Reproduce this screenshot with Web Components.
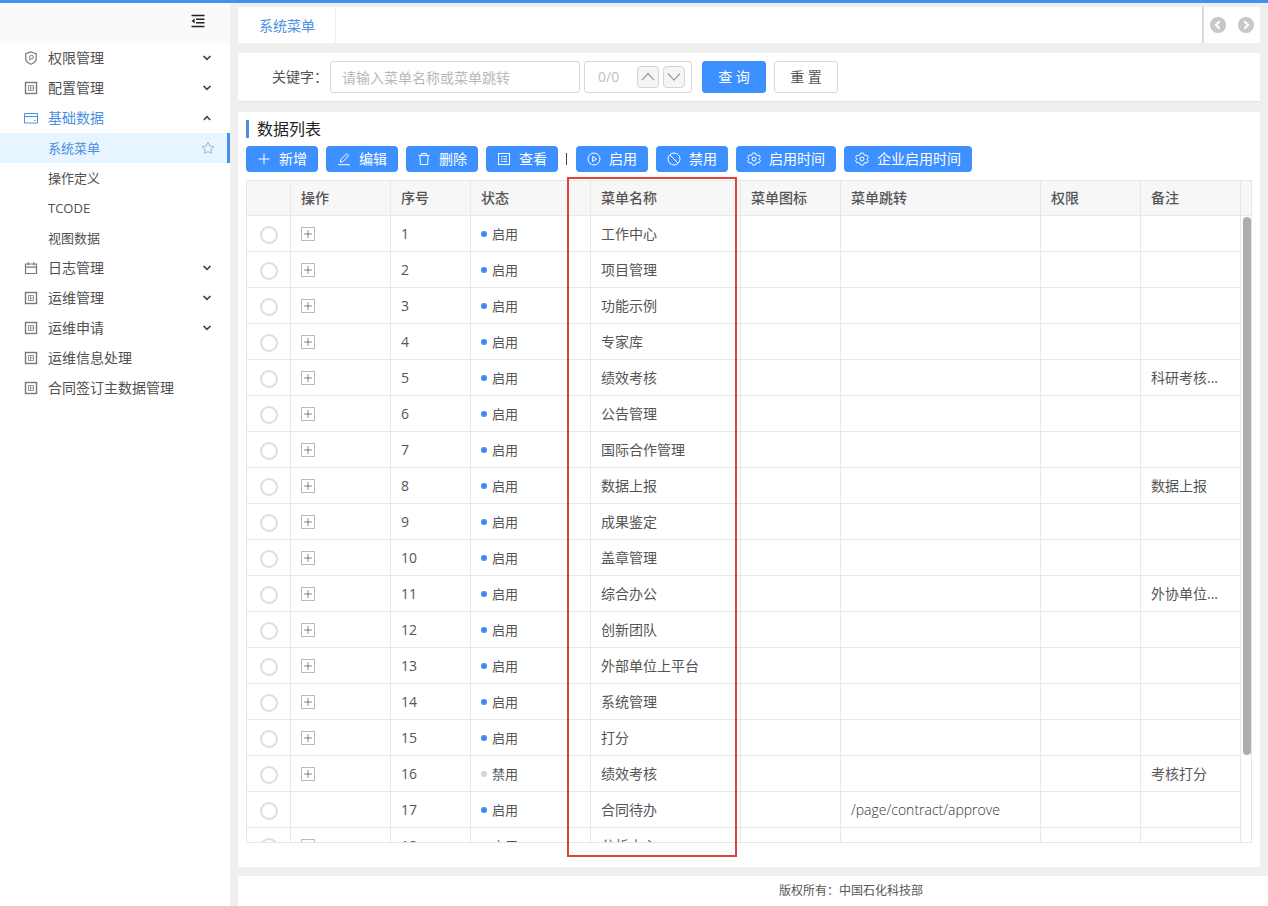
<!DOCTYPE html>
<html lang="zh-CN">
<head>
<meta charset="utf-8">
<title>系统菜单</title>
<style>
  html, body { height: 100%; margin: 0; }
  body { font: 14px/20px "Open Sans", "Noto Sans CJK SC", sans-serif; color: #555; }
</style>
</head>
<body>
<app-shell>
  <side-nav slot="nav">
    <nav-item icon="shield" arrow="down">权限管理</nav-item>
    <nav-item icon="list" arrow="down">配置管理</nav-item>
    <nav-item icon="card" arrow="up" active>基础数据</nav-item>
    <nav-item sub selected>系统菜单</nav-item>
    <nav-item sub>操作定义</nav-item>
    <nav-item sub>TCODE</nav-item>
    <nav-item sub>视图数据</nav-item>
    <nav-item icon="calendar" arrow="down">日志管理</nav-item>
    <nav-item icon="list" arrow="down">运维管理</nav-item>
    <nav-item icon="list" arrow="down">运维申请</nav-item>
    <nav-item icon="list">运维信息处理</nav-item>
    <nav-item icon="list">合同签订主数据管理</nav-item>
  </side-nav>
  <tab-bar>系统菜单</tab-bar>
  <search-panel></search-panel>
  <data-panel heading="数据列表">
    <tool-button slot="tools" icon="plus">新增</tool-button>
    <tool-button slot="tools" icon="edit">编辑</tool-button>
    <tool-button slot="tools" icon="trash">删除</tool-button>
    <tool-button slot="tools" icon="table">查看</tool-button>
    <tool-divider slot="tools"></tool-divider>
    <tool-button slot="tools" icon="play">启用</tool-button>
    <tool-button slot="tools" icon="ban">禁用</tool-button>
    <tool-button slot="tools" icon="gear">启用时间</tool-button>
    <tool-button slot="tools" icon="gear">企业启用时间</tool-button>
    <data-table></data-table>
  </data-panel>
  <page-footer slot="footer">版权所有：中国石化科技部</page-footer>
</app-shell>

<script>
const ICONS = {
  shield: '<path d="M7 1 12.2 2.8V8.6C12.2 10.6 9.4 12.3 7 13.3 4.6 12.3 1.8 10.6 1.8 8.6V2.8Z" stroke-width="1.2"/><circle cx="7.5" cy="6.2" r="1.9"/><path d="M6.2 7.6 5 9.4"/>',
  list: '<rect x="1.5" y="1.5" width="11" height="11" stroke-width="1.4"/><path d="M4.5 4.5h5v5h-5zM6.5 4.5v5M6.5 7h3" opacity=".75"/>',
  table: '<rect x="1.5" y="1.5" width="11" height="11"/><path d="M4 4.5h1.5M6.500 4.500H10M4 7h1.500M6.500 7H10M4 9.500h1.500M6.500 9.500H10"/>',
  card: '<path d="M.5 2.500h13v9.500H.5zM.5 5.500h13M10 9.500h1.500"/>',
  calendar: '<path d="M1.500 3h11v9.500h-11zM1.500 6.200h11M4.300 1.200v3M9.700 1.200v3" stroke-width="1.200"/>',
  down: '<path d="M3.500 5 7 8.400 10.500 5" stroke-width="1.700"/>',
  up: '<path d="M3.800 9 7 5.700 10.200 9" stroke-width="1.600"/>',
  star: '<path d="M7 1.200 8.800 5l4 .6-2.900 2.800.7 4.100L7 10.600l-3.600 1.900.7-4.100L1.200 5.600l4-.6Z"/>',
  fold: '<path d="M.5 1.500h13M5 5.300h8.500M5 8.800h8.500M.5 12.500h13" stroke-width="1.400"/><path d="M3.600 4.400v5.200L.6 7Z" fill="currentColor" stroke="none"/>',
  plus: '<path d="M7 1.500v11M1.500 7h11"/>',
  edit: '<path d="M1.200 12.700h11.600M3.200 10.200l.5-2.600L9.600 1.800l2 2-5.800 5.900Z"/>',
  trash: '<path d="M1.500 3.600h11M4.700 3.400V1.500h4.600v1.900M2.900 3.800l.5 8.700h7.200l.5-8.700"/>',
  play: '<circle cx="7" cy="7" r="6"/><path d="M5.600 4.400v5.200L9.500 7Z"/>',
  ban: '<circle cx="7" cy="7" r="6"/><path d="m3 3 8 8"/>',
  gear: '<circle cx="7" cy="7" r="2"/><path d="M5.500 1.100h3l.5 1.700 1.100.7 1.800-.5 1.500 2.600-1.300 1.200v.5l1.300 1.200-1.500 2.600-1.800-.5-1.100.7-.5 1.700h-3L5 11.300l-1.100-.7-1.800.5L.6 8.500l1.300-1.200v-.5L.6 5.600 2.100 3l1.800.5L5 2.800Z"/>',
  wideup: '<path d="M1 10.200 7 3.500l6 6.700" stroke-width="1.200"/>',
  widedown: '<path d="m1 3.500 6 6.700 6-6.700" stroke-width="1.200"/>',
  prev: '<circle cx="7" cy="7" r="7" fill="currentColor" stroke="none"/><path d="M8.500 3.800 5.200 7l3.300 3.200" stroke="#fff" stroke-width="1.900"/>',
  next: '<circle cx="7" cy="7" r="7" fill="currentColor" stroke="none"/><path d="M5.500 3.800 8.800 7l-3.300 3.200" stroke="#fff" stroke-width="1.900"/>'
};

function define(name, html, setup) {
  const template = document.createElement('template');
  template.innerHTML = html;
  customElements.define(name, class extends HTMLElement {
    connectedCallback() {
      if (this.shadowRoot) return;
      const root = this.attachShadow({ mode: 'open' });
      root.append(template.content.cloneNode(true));
      if (setup) setup(this, root);
    }
  });
}

define('app-icon', `
<style>
  :host { display: block; flex: none; width: 14px; height: 14px; }
  svg { display: block; width: 100%; height: 100%; fill: none; stroke: currentColor; stroke-width: 1; }
</style>`, (host, root) => {
  root.innerHTML += `<svg viewBox="0 0 14 14" aria-hidden="true">${ICONS[host.getAttribute('name')]}</svg>`;
});

define('app-shell', `
<style>
  :host { display: flex; box-sizing: border-box; height: 100vh; border-top: 3px solid #468ff0; background: #efefef; }
  .side { flex: none; width: 230px; background: #fff; }
  .right { flex: 1; min-width: 0; margin-left: 8px; display: flex; flex-direction: column; }
  main { flex: 1; min-height: 0; display: flex; flex-direction: column; gap: 10px; padding: 4px 8px 9px 0; }
</style>
<div class="side"><slot name="nav"></slot></div>
<div class="right">
  <main><slot></slot></main>
  <slot name="footer"></slot>
</div>`);

define('side-nav', `
<style>
  :host { display: block; }
  header { display: flex; align-items: center; justify-content: flex-end; height: 40px; padding-right: 25px; background: #fafafa; }
  button { padding: 0; border: 0; background: none; color: #222; margin-bottom: 4px; }
</style>
<header><button aria-label="收起"><app-icon name="fold"></app-icon></button></header>
<nav><slot></slot></nav>`);

define('nav-item', `
<style>
  :host { display: block; }
  a { box-sizing: border-box; display: flex; align-items: center; gap: 10px; height: 30px; padding: 0 16px 0 24px; color: #505050; text-decoration: none; border-right: 0 solid #4a90e8; }
  .label { flex: 1; }
  .lead { color: #777; }
  .arrow { color: #444; }
  :host([active]) .label, :host([active]) .lead { color: #4a8fe2; }
  :host([sub]) a { padding-left: 48px; font-size: 13px; }
  :host([selected]) a { color: #4a8fe2; background: #e6f5ff; border-right-width: 3px; padding-right: 12px; }
  .star { color: #aab4be; }
</style>
<a href="#"><span class="label"><slot></slot></span></a>`, (host, root) => {
  const a = root.querySelector('a');
  const icon = (name, cls) => `<app-icon class="${cls}" name="${name}"></app-icon>`;
  if (host.hasAttribute('icon')) a.insertAdjacentHTML('afterbegin', icon(host.getAttribute('icon'), 'lead'));
  if (host.hasAttribute('arrow')) a.insertAdjacentHTML('beforeend', icon(host.getAttribute('arrow'), 'arrow'));
  if (host.hasAttribute('selected')) a.insertAdjacentHTML('beforeend', icon('star', 'star'));
});

define('tab-bar', `
<style>
  :host { display: flex; flex: none; height: 36px; background: #fff; }
  .tabs { flex: 1; display: flex; }
  a { display: flex; align-items: center; padding: 2px 20px 0 21px; color: #4a8fe2; text-decoration: none; border-right: 1px solid #eee; }
  .move { display: flex; align-items: center; gap: 12px; padding: 0 6px; border-left: 2px solid #ddd8d8; }
  button { padding: 0; border: 0; background: none; color: #c8c6c6; }
  app-icon { width: 16px; height: 16px; }
</style>
<div class="tabs"><a href="#"><slot></slot></a></div>
<div class="move">
  <button aria-label="上一个"><app-icon name="prev"></app-icon></button>
  <button aria-label="下一个"><app-icon name="next"></app-icon></button>
</div>`);

define('search-panel', `
<style>
  :host { display: flex; flex: none; align-items: center; height: 48px; padding-left: 34px; background: #fff; border-bottom: 1px solid #e4e4e4; }
  button, input { font: inherit; color: inherit; box-sizing: border-box; }
  label { margin-right: 2px; }
  input { width: 250px; height: 32px; padding: 0 11px; border: 1px solid #d9d9d9; border-radius: 3px; outline: 0; }
  input::placeholder { color: #b8b8b8; opacity: 1; }
  .count { box-sizing: border-box; display: flex; align-items: center; gap: 4px; width: 108px; height: 32px; margin: 0 10px 0 4px; padding: 0 6px 0 13px; border: 1px solid #d9d9d9; border-radius: 3px; color: #c0c0c0; }
  .count span { flex: 1; }
  .count button { width: 22px; height: 22px; padding: 0 3px; border: 1px solid #d4d4d4; border-radius: 4px; background: #f5f5f5; color: #999; }
  .act { width: 64px; height: 32px; padding: 0; border: 1px solid #d9d9d9; border-radius: 3px; background: #fff; }
  .primary { margin-right: 8px; border-color: #3c90ff; background: #3c90ff; color: #fff; }
</style>
<label for="key">关键字：</label>
<input id="key" type="text" placeholder="请输入菜单名称或菜单跳转">
<div class="count"><span>0/0</span>
  <button aria-label="上一条"><app-icon name="wideup"></app-icon></button>
  <button aria-label="下一条"><app-icon name="widedown"></app-icon></button>
</div>
<button class="act primary">查 询</button>
<button class="act">重 置</button>`);

define('tool-button', `
<style>
  :host { display: block; }
  button { display: flex; align-items: center; gap: 8px; height: 26px; padding: 0 11px; border: 0; border-radius: 4px; background: #3c90ff; color: #fff; font: inherit; white-space: nowrap; }
</style>
<button><slot></slot></button>`, (host, root) => {
  root.querySelector('button').insertAdjacentHTML('afterbegin', `<app-icon name="${host.getAttribute('icon')}"></app-icon>`);
});

define('tool-divider', `
<style>
  :host { display: flex; align-items: center; width: 2px; }
  i { width: 1px; height: 12px; background: #444; }
</style><i></i>`);

define('data-panel', `
<style>
  :host { flex: 1; min-height: 0; display: flex; flex-direction: column; box-sizing: border-box; padding: 7px 8px 24px; background: #fff; }
  h2 { flex: none; display: flex; align-items: center; gap: 8px; margin: 0 0 7px; height: 20px; font-size: 16px; font-weight: 400; color: #222; }
  h2::before { content: ""; width: 3px; height: 18px; background: #4a8fe2; }
  .tools { flex: none; display: flex; gap: 8px; margin-bottom: 8px; }
</style>
<h2></h2>
<div class="tools"><slot name="tools"></slot></div>
<slot></slot>`, (host, root) => {
  root.querySelector('h2').textContent = host.getAttribute('heading');
});

const NAMES = ['工作中心', '项目管理', '功能示例', '专家库', '绩效考核', '公告管理', '国际合作管理', '数据上报', '成果鉴定', '盖章管理', '综合办公', '创新团队', '外部单位上平台', '系统管理', '打分', '绩效考核', '合同待办', '分析中心'];
const NOTES = { 5: '科研考核...', 8: '数据上报', 11: '外协单位...', 16: '考核打分' };
const PATHS = { 17: '/page/contract/approve' };

define('data-table', `
<style>
  :host { position: relative; flex: 1; min-height: 0; display: flex; }
  .frame { flex: 1; min-width: 0; display: flex; box-sizing: border-box; border: 1px solid #e6e6e6; overflow: hidden; }
  .rows { flex: 1; min-width: 0; overflow: hidden; }
  table { width: 100%; table-layout: fixed; border-collapse: separate; border-spacing: 0; }
  th, td { box-sizing: border-box; height: 36px; padding: 0 10px; text-align: left; white-space: nowrap; border-right: 1px solid #e8e8e8; border-bottom: 1px solid #e8e8e8; }
  th { height: 35px; background: #f7f7f7; font-weight: 500; }
  td:first-child { padding: 3px 0 0; text-align: center; }
  .path { font-weight: 300; color: #333; }
  input { appearance: none; display: block; box-sizing: border-box; width: 18px; height: 18px; margin: 0 auto; border: 2px solid #ddd; border-radius: 50%; background: #fff; }
  .expand { display: block; box-sizing: border-box; width: 14px; height: 14px; padding: 1px; border: 1px solid #bbb; background: #fff; color: #555; }
  .expand app-icon { width: 10px; height: 10px; }
  .state { display: flex; align-items: center; gap: 5px; font-size: 13px; }
  .state::before { content: ""; width: 6px; height: 6px; border-radius: 50%; background: #3c8cf0; }
  .off::before { background: #d4d4d4; }
  .bar { flex: none; width: 10px; display: flex; flex-direction: column; }
  .bar::before { content: ""; flex: none; height: 34px; background: #f7f7f7; border-bottom: 1px solid #e8e8e8; }
  .track { flex: 1; padding: 1px 0 0 2px; }
  .thumb { width: 8px; height: 86%; border-radius: 4px; background: #adadad; }
  .mark { position: absolute; left: 321px; top: -3px; bottom: -14px; width: 170px; box-sizing: border-box; border: 2px solid #e0413d; pointer-events: none; }
</style>
<div class="frame">
  <div class="rows">
    <table>
      <colgroup><col style="width:44px"><col style="width:100px"><col style="width:80px"><col style="width:120px"><col style="width:150px"><col style="width:100px"><col><col style="width:100px"><col style="width:100px"></colgroup>
      <thead><tr><th></th><th>操作</th><th>序号</th><th>状态</th><th>菜单名称</th><th>菜单图标</th><th>菜单跳转</th><th>权限</th><th>备注</th></tr></thead>
      <tbody></tbody>
    </table>
  </div>
  <div class="bar"><div class="track"><div class="thumb"></div></div></div>
</div>
<div class="mark"></div>`, (host, root) => {
  root.querySelector('tbody').innerHTML = NAMES.map((name, i) => {
    const n = i + 1;
    const off = n === 16;
    return `<tr><td><input type="radio" name="row" aria-label="${name}"></td>
      <td>${n === 17 ? '' : '<button class="expand" aria-label="展开"><app-icon name="plus"></app-icon></button>'}</td>
      <td>${n}</td><td><span class="state${off ? ' off' : ''}">${off ? '禁用' : '启用'}</span></td>
      <td>${name}</td><td></td><td class="path">${PATHS[n] || ''}</td><td></td><td>${NOTES[n] || ''}</td></tr>`;
  }).join('');
});

define('page-footer', `
<style>
  :host { flex: none; display: flex; align-items: center; justify-content: center; height: 30px; padding-left: 196px; background: #fff; font-size: 12px; }
</style><span><slot></slot></span>`);
</script>
</body>
</html>
